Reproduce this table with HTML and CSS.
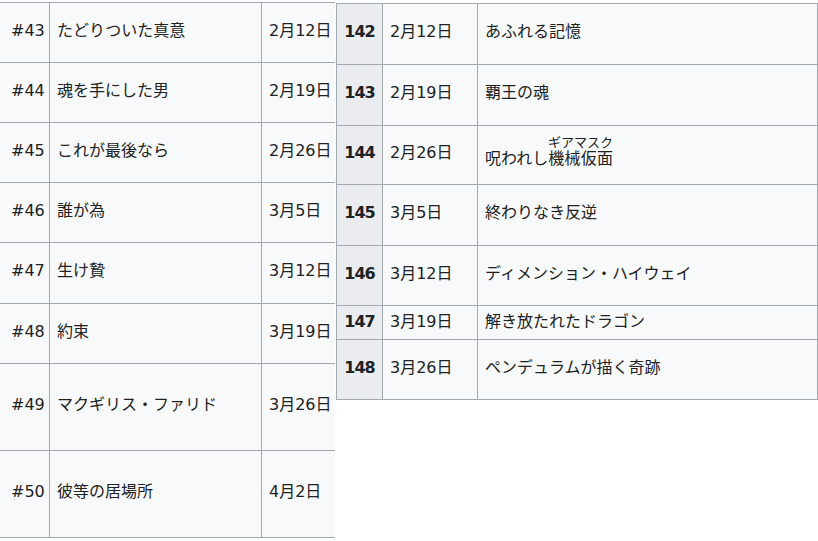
FILE: index.html
```html
<!DOCTYPE html>
<html lang="ja">
<head>
<meta charset="utf-8">
<link rel="stylesheet" href="styles.css">
</head>
<body>
<div class="page">
  <div class="left-wrap">
    <table class="ep left">
      <colgroup><col class="c-num"><col class="c-title"><col class="c-date"></colgroup>
      <tbody>
        <tr class="h60"><td class="num">#43</td><td>たどりついた真意</td><td>2月12日</td></tr>
        <tr class="h60"><td class="num">#44</td><td>魂を手にした男</td><td>2月19日</td></tr>
        <tr class="h60"><td class="num">#45</td><td>これが最後なら</td><td>2月26日</td></tr>
        <tr class="h60"><td class="num">#46</td><td>誰が為</td><td>3月5日</td></tr>
        <tr class="h61"><td class="num">#47</td><td>生け贄</td><td>3月12日</td></tr>
        <tr class="h60"><td class="num">#48</td><td>約束</td><td>3月19日</td></tr>
        <tr class="h87"><td class="num">#49</td><td>マクギリス・ファリド</td><td>3月26日</td></tr>
        <tr class="h87"><td class="num">#50</td><td>彼等の居場所</td><td>4月2日</td></tr>
      </tbody>
    </table>
  </div>
  <table class="ep right">
    <colgroup><col class="r-num"><col class="r-date"><col class="r-title"></colgroup>
    <tbody>
      <tr class="h61"><th>142</th><td>2月12日</td><td>あふれる記憶</td></tr>
      <tr class="h61"><th>143</th><td>2月19日</td><td>覇王の魂</td></tr>
      <tr class="h59"><th>144</th><td>2月26日</td><td>呪われし<ruby>機械仮面<rt>ギアマスク</rt></ruby></td></tr>
      <tr class="h61"><th>145</th><td>3月5日</td><td>終わりなき反逆</td></tr>
      <tr class="h60"><th>146</th><td>3月12日</td><td>ディメンション・ハイウェイ</td></tr>
      <tr class="h34"><th>147</th><td>3月19日</td><td>解き放たれたドラゴン</td></tr>
      <tr class="h60"><th>148</th><td>3月26日</td><td>ペンデュラムが描く奇跡</td></tr>
    </tbody>
  </table>
</div>
</body>
</html>
```

FILE: styles.css
```css
html, body {
  margin: 0;
  padding: 0;
  background: #ffffff;
}

body {
  font-family: "DejaVu Sans", "Noto Sans CJK JP", sans-serif;
  font-size: 16px;
  color: #202122;
  line-height: 1.5;
}

.page {
  display: flex;
  align-items: flex-start;
  gap: 1px;
}

.left-wrap {
  width: 335px;
  overflow: hidden;
  padding-top: 2px;
  flex: none;
}

.ep {
  border-collapse: collapse;
  table-layout: fixed;
  background: #f8f9fa;
}

.ep td, .ep th {
  border: 1px solid #a2a9b1;
  padding: 0 7px 4px;
  vertical-align: middle;
  white-space: nowrap;
}

.left {
  width: 348px;
  margin-left: -2px;
}

.c-num { width: 51px; }
.c-title { width: 212px; }
.c-date { width: 85px; }

.left td.num {
  padding-left: 12px;
  padding-right: 0;
}

.right {
  width: 481px;
  margin-top: 3px;
  flex: none;
}

.r-num { width: 46px; }
.r-date { width: 95px; }
.r-title { width: 340px; }

.right th {
  background: #eaecf0;
  font-weight: bold;
  text-align: center;
  padding: 0 0 4px;
  letter-spacing: -1px;
}

.right .h34 td, .right .h34 th {
  padding-bottom: 2px;
}

ruby rt {
  font-size: 13px;
  line-height: 1.1;
}

.h34 { height: 34px; }
.h59 { height: 59px; }
.h60 { height: 60px; }
.h61 { height: 61px; }
.h87 { height: 87px; }
```
